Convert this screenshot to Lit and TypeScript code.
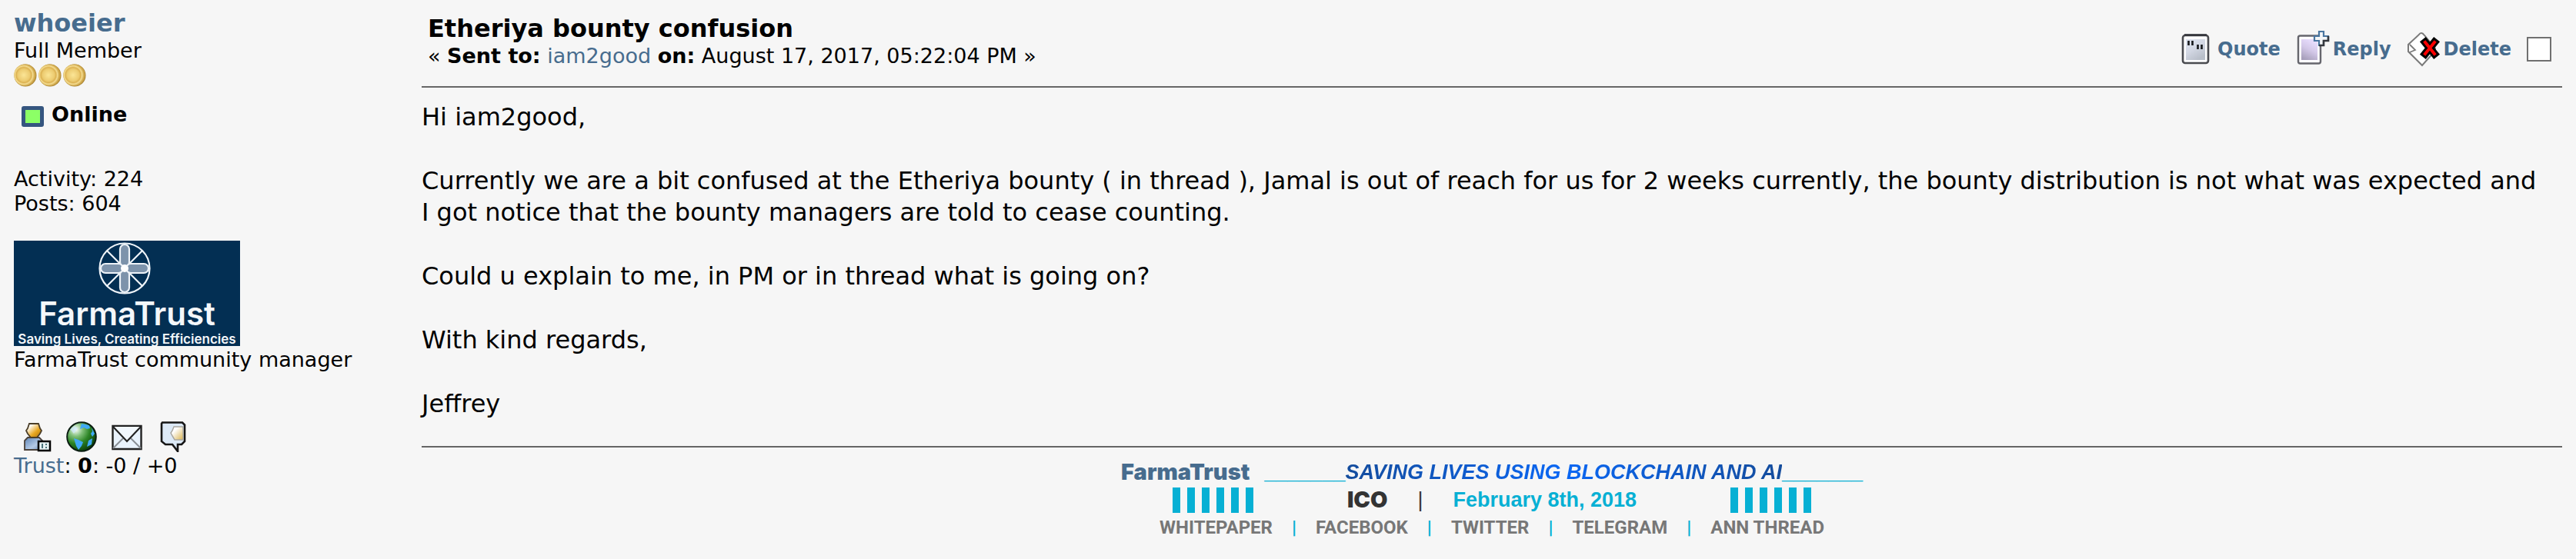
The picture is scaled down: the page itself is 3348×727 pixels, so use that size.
import { LitElement, html, css, svg } from "lit";
import { customElement } from "lit/decorators.js";

const coin = html`<svg class="coin" viewBox="0 0 30 30" aria-hidden="true">
  <defs>
    <radialGradient id="g" cx=".45" cy=".5" r=".5">
      <stop offset="0" stop-color="#fbe596" /><stop offset=".55" stop-color="#eccb70" />
      <stop offset=".7" stop-color="#dcb252" /><stop offset=".82" stop-color="#f4dc90" />
      <stop offset="1" stop-color="#cda548" />
    </radialGradient>
  </defs>
  <circle cx="15" cy="15" r="14.5" fill="#a98434" />
  <circle cx="14.4" cy="14.6" r="14.2" fill="url(#g)" />
</svg>`;

const actions = [
  {
    label: "Quote",
    icon: svg`<svg viewBox="0 0 44 48" class="act-icon" aria-hidden="true">
      <defs><linearGradient id="q" x2=".6" y2="1"><stop offset="0" stop-color="#dfe4f0"/><stop offset=".5" stop-color="#d3d8e4"/><stop offset="1" stop-color="#b9bfca"/></linearGradient></defs>
      <rect x="3" y="6" width="33" height="36" rx="3" fill="#fcfcfd" stroke="#4a4b50" stroke-width="2.6"/>
      <path d="M5 5.500h29" stroke="#33343a" stroke-width="2.6"/>
      <rect x="7" y="11" width="25" height="27" fill="url(#q)"/>
      <path d="M10.500 13v6M15.500 13v6M22.500 18v6M27.500 18v6" stroke="#15171a" stroke-width="2.6"/>
    </svg>`,
  },
  {
    label: "Reply",
    icon: svg`<svg viewBox="0 0 44 48" class="act-icon" aria-hidden="true">
      <defs><linearGradient id="r" x1=".7" x2=".3" y2="1"><stop offset=".1" stop-color="#e6dbfb"/><stop offset=".5" stop-color="#d3c8e8"/><stop offset="1" stop-color="#a79fbb"/></linearGradient></defs>
      <rect x="3" y="6.500" width="29" height="36" rx="2.500" fill="#fdfcff" stroke="#66666d" stroke-width="2.4"/>
      <rect x="7" y="11" width="21" height="27" fill="url(#r)"/>
      <path d="M30 1h6v6h6v6h-6v6h-6v-6h-6V7h6z" fill="#f4f6f8" stroke="#4a76a0" stroke-width="2.2"/>
      <path d="M42 7v6h-6v6h-6" fill="none" stroke="#34383e" stroke-width="2.6"/>
    </svg>`,
  },
  {
    label: "Delete",
    icon: svg`<svg viewBox="0 0 44 48" class="act-icon" aria-hidden="true">
      <path d="M19 3q2 0 4 3l14 17v3L20 45 2 27v-9L16 5q1-2 3-2z" fill="#fff" stroke="#7a7a7a" stroke-width="2"/>
      <path d="M4 18l7 7-7 3" fill="none" stroke="#7a7a7a" stroke-width="1.800"/>
      <path d="M24 15l12 15M36 15L24 30" stroke="#000" stroke-width="10" stroke-linecap="square"/>
      <path d="M24 15l12 15M36 15L24 30" stroke="#f00" stroke-width="4" stroke-linecap="square"/>
    </svg>`,
  },
];

const contacts = [
  {
    label: "Profile",
    icon: svg`<svg viewBox="0 0 40 40" class="contact-icon" aria-hidden="true">
      <defs>
        <linearGradient id="h" x2="1" y2="1"><stop offset=".2" stop-color="#fff"/><stop offset=".6" stop-color="#e8a822"/><stop offset="1" stop-color="#a86c06"/></linearGradient>
        <linearGradient id="b" x2="1" y2="1"><stop offset="0" stop-color="#5d83b5"/><stop offset=".6" stop-color="#b4cae6"/><stop offset="1" stop-color="#6486b0"/></linearGradient>
      </defs>
      <path d="M5 37V25l4-4h15l5 5v11z" fill="url(#b)" stroke="#4a4038" stroke-width="1.800"/>
      <path d="M11 3h12l2 6 2 3-2 4-4 5h-8l-4-5-2-4 2-3z" fill="url(#h)" stroke="#4b3e28" stroke-width="1.800"/>
      <path d="M23 26h15v12H23z" fill="#e6f2f4" stroke="#000" stroke-width="2.500"/>
      <path d="M28 29v6M33 29v2M33 33v2" stroke="#4a737b" stroke-width="2"/>
    </svg>`,
  },
  {
    label: "Website",
    icon: svg`<svg viewBox="0 0 40 40" class="contact-icon" aria-hidden="true">
      <defs><radialGradient id="e" cx=".3" cy=".25" r=".8"><stop offset="0" stop-color="#fff"/><stop offset=".3" stop-color="#7fbf78"/><stop offset=".6" stop-color="#2c8526"/><stop offset="1" stop-color="#0b3d0a"/></radialGradient></defs>
      <circle cx="20" cy="20" r="18.800" fill="url(#e)"/>
      <path d="M20 3l10 2 1 4-4 1-4-2-5 2zM10 22l6 2 6 3-2 5-4 5-3-5zM33 8l4 8-3 4-2-4 2-3zM29 25l5-3-1 8-6 3z" fill="#3fa9f5"/>
      <path d="M5 10l6-4 4 3-5 7z" fill="#cfeafc" opacity=".7"/>
      <circle cx="20" cy="20" r="18.800" fill="none" stroke="#0a1c12" stroke-width="2"/>
    </svg>`,
  },
  {
    label: "Email",
    icon: svg`<svg viewBox="0 0 40 40" class="contact-icon" aria-hidden="true">
      <path d="M1.500 6h37v30h-37z" fill="#e9f3fd" stroke="#222" stroke-width="2.400"/>
      <path d="M2 35l13-13M38 35L25 22" stroke="#8a8f96" stroke-width="2"/>
      <path d="M2 7l18 19L38 7" fill="#f1f7fd" stroke="#222" stroke-width="2.200"/>
    </svg>`,
  },
  {
    label: "Personal message",
    icon: svg`<svg viewBox="0 0 40 40" class="contact-icon" aria-hidden="true">
      <defs><linearGradient id="m" x2="1" y2="1"><stop offset=".3" stop-color="#fff"/><stop offset="1" stop-color="#d9b34f"/></linearGradient></defs>
      <path d="M7 1.500h26l3 3V26l-4 4h-5v9l-7-9h-9l-5-4V3z" fill="#dce9f6" stroke="#161616" stroke-width="2.600"/>
      <path d="M22 7h12v17H23l-3-5-2-4 2-3z" fill="url(#m)" stroke="#a9a6a0" stroke-width="1.500"/>
    </svg>`,
  },
];

const emblem = svg`<svg class="emblem" viewBox="0 0 70 70" aria-hidden="true">
  <g fill="none" stroke="#eef3f8" stroke-width="2.200">
    <circle cx="35" cy="35" r="32.500"/>
    <path d="M12 12l46 46M58 12L12 58"/>
    <g fill="#7d93ab">
      <rect x="29" y="4" width="12" height="29" rx="6"/><rect x="29" y="37" width="12" height="29" rx="6"/>
      <rect x="4" y="29" width="29" height="12" rx="6"/><rect x="37" y="29" width="29" height="12" rx="6"/>
    </g>
  </g>
  <circle cx="35" cy="35" r="5" fill="#fff"/>
</svg>`;

const bars = html`<span class="bars" aria-hidden="true"><i></i><i></i><i></i><i></i><i></i><i></i></span>`;
const links = ["WHITEPAPER", "FACEBOOK", "TWITTER", "TELEGRAM", "ANN THREAD"];

@customElement("app-root")
export class AppRoot extends LitElement {
  static styles = css`
    :host {
      display: block;
      min-height: 100vh;
      background: #f6f6f6;
      color: #000;
      font: 27px/32px Verdana, "DejaVu Sans", sans-serif;
    }
    * { box-sizing: border-box; }
    a { color: #476c8e; text-decoration: none; }
    p { margin: 0; }
    .post {
      display: grid;
      grid-template-columns: 530px minmax(0, 1fr);
      padding: 10px 18px;
    }
    .name { display: block; font-size: 32px; line-height: 40px; font-weight: bold; }
    .coins { display: flex; gap: 2px; padding-top: 1px; }
    .coin { width: 30px; height: 30px; }
    .online { display: flex; align-items: center; gap: 10px; margin: 19px 10px 52px; font-weight: bold; }
    .lamp { width: 29px; height: 27px; margin-top: 6px; border: 5px solid #35557f; border-radius: 3px; background: #8cff66; }
    .avatar {
      display: flex; flex-direction: column; align-items: center;
      width: 294px; height: 137px; margin: 32px 0 2px;
      background: #032f53; color: #f4f7fa; white-space: nowrap;
    }
    .emblem { flex: none; width: 70px; height: 70px; margin: 1px 6px 0 0; }
    .brand { font: 600 42px/48px Inter, sans-serif; }
    .motto { font: 600 17px/18px Inter, sans-serif; }
    .contacts { display: flex; gap: 19px; padding: 64px 0 2px 9px; }
    .contact { display: flex; }
    .contact-icon { width: 40px; height: 40px; }
    .head { display: flex; justify-content: space-between; align-items: flex-end; padding: 7px 14px 23px 8px; }
    .title { margin: 0; font-size: 32px; line-height: 40px; }
    .actions { display: flex; align-items: center; gap: 20px; padding-bottom: 1px; font-weight: bold; font-size: 24px; }
    .action { display: flex; align-items: center; gap: 4px; }
    .act-icon { width: 44px; height: 48px; }
    .pick { appearance: none; width: 32px; height: 32px; margin: 0; border: 2px solid #707070; background: #fff; }
    .rule { height: 2px; margin: 0; border: 0; background: #666; }
    .body { padding: 18px 0 34px; font-size: 32px; line-height: 41px; }
    .body p + p { margin-top: 42px; }
    .sig {
      display: flex; flex-direction: column; align-items: center; padding-top: 14px;
      font: bold 27px/36px "Liberation Sans", Arial, sans-serif; white-space: nowrap;
    }
    .row { display: flex; align-items: center; height: 36px; }
    .black { font-family: "Arial Black", Inter, sans-serif; font-size: 29px; font-weight: 900; }
    .ft { margin-right: 19px; }
    .line { color: #07b0d4; }
    .slogan {
      font-style: italic; color: transparent;
      background: linear-gradient(90deg, #144c9c, #0a67f4 50%, #144c9c);
      -webkit-background-clip: text; background-clip: text;
    }
    .bars { display: flex; gap: 9px; }
    .bars i { width: 10px; height: 33px; background: #07b0d4; }
    .ico { margin-left: 122px; color: #333; }
    .pipe { margin: 0 39px; color: #333; font-weight: normal; }
    .date { margin-right: 122px; color: #07b0d4; }
    .links { gap: 25px; font-family: Roboto, sans-serif; font-size: 24px; color: #07b0d4; }
    .links a { color: #777; }
  `;

  render() {
    return html`<article class="post">
      <aside>
        <a class="name" href="#">whoeier</a>
        <p>Full Member</p>
        <div class="coins">${coin}${coin}${coin}</div>
        <div class="online"><span class="lamp"></span>Online</div>
        <p>Activity: 224</p>
        <p>Posts: 604</p>
        <div class="avatar">${emblem}<span class="brand">FarmaTrust</span><span class="motto">Saving Lives, Creating Efficiencies</span></div>
        <p>FarmaTrust community manager</p>
        <div class="contacts">
          ${contacts.map((c) => html`<a class="contact" href="#" aria-label=${c.label}>${c.icon}</a>`)}
        </div>
        <p><a href="#">Trust</a>: <b>0</b>: -0 / +0</p>
      </aside>
      <section>
        <header class="head">
          <div>
            <h1 class="title">Etheriya bounty confusion</h1>
            <p>« <b>Sent to:</b> <a href="#">iam2good</a> <b>on:</b> August 17, 2017, 05:22:04 PM »</p>
          </div>
          <div class="actions">
            ${actions.map((a) => html`<a class="action" href="#">${a.icon}${a.label}</a>`)}
            <input class="pick" type="checkbox" aria-label="Select message" />
          </div>
        </header>
        <hr class="rule" />
        <div class="body">
          <p>Hi iam2good,</p>
          <p>Currently we are a bit confused at the Etheriya bounty ( in thread ), Jamal is out of reach for us for 2 weeks currently, the bounty distribution is not what was expected and I&nbsp;got notice that the bounty managers are told to cease counting.</p>
          <p>Could u explain to me, in PM or in thread what is going on?</p>
          <p>With kind regards,</p>
          <p>Jeffrey</p>
        </div>
        <hr class="rule" />
        <footer class="sig">
          <div class="row"><a class="black ft" href="#">FarmaTrust</a><span class="line">_______</span><span class="slogan">SAVING LIVES USING BLOCKCHAIN AND AI</span><span class="line">_______</span></div>
          <div class="row">${bars}<span class="ico black">ICO</span><span class="pipe">|</span><span class="date">February 8th, 2018</span>${bars}</div>
          <div class="row links">${links.map((l, i) => html`${i ? html`<span>|</span>` : ""}<a href="#">${l}</a>`)}</div>
        </footer>
      </section>
    </article>`;
  }
}
